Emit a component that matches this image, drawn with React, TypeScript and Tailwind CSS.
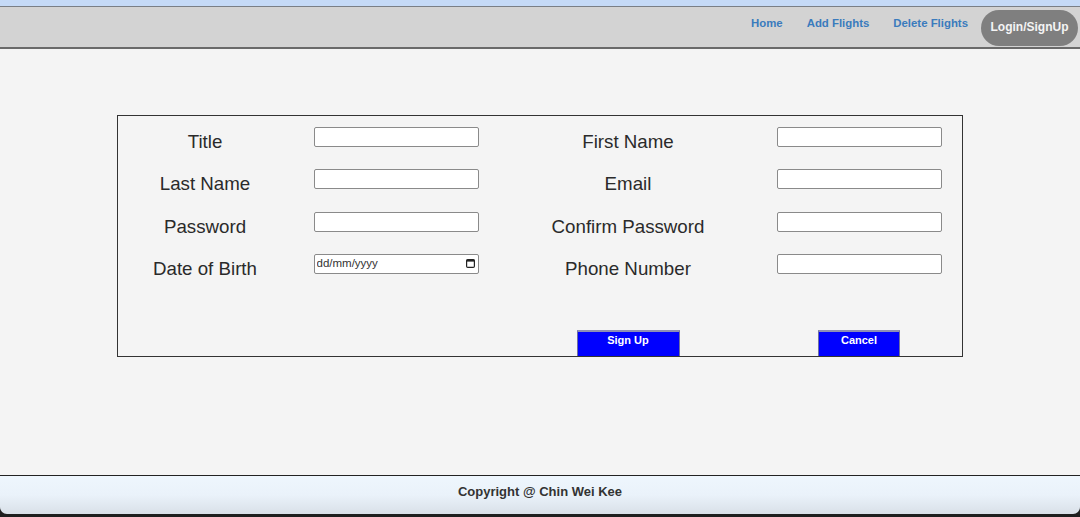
import React from "react";

const leftFields = ["Title", "Last Name", "Password", "Date of Birth"];
const rightFields = ["First Name", "Email", "Confirm Password", "Phone Number"];

function TextBox({ date }: { date?: boolean }) {
    if (date) {
        return (
            <div className="relative w-[165px] h-[20px]">
                <input
                    type="text"
                    placeholder="dd/mm/yyyy"
                    className="block w-full h-full border border-[#8a8a8a] rounded-[2px] bg-white pl-[2px] pb-[1px] text-[11.5px] text-[#222] placeholder:text-[#333] outline-none"
                />
                <svg
                    className="absolute right-[4px] top-[5px]"
                    width="9"
                    height="9"
                    viewBox="0 0 9 9"
                >
                    <rect x="0.6" y="0.6" width="7.8" height="7.8" rx="1.2" fill="none" stroke="#222" strokeWidth="1.2" />
                    <rect x="0.6" y="0.6" width="7.8" height="2" fill="#222" />
                </svg>
            </div>
        );
    }
    return (
        <input
            type="text"
            className="block w-[165px] h-[20px] border border-[#8a8a8a] rounded-[2px] bg-white outline-none"
        />
    );
}

function Label({ text }: { text: string }) {
    return (
        <div className="pt-[15px] text-center text-[18.72px] leading-[22px] text-[#2a2a2a]">
            {text}
        </div>
    );
}

export default function App() {
    return (
        <div
            className="flex flex-col h-[517px] w-[1080px] bg-[#f4f4f4] overflow-hidden"
            style={{ fontFamily: '"Liberation Sans", Arial, sans-serif' }}
        >
            <div className="h-[7px] bg-[#c5daf7] border-b border-[#7a7f86]" />
            <nav className="h-[42px] bg-[#d3d3d3] border-b-2 border-[#6a6a6a] flex justify-end items-start pr-[2px]">
                <a className="mt-[10px] text-[11.4px] leading-[13px] font-bold text-[#3a7bbd]">Home</a>
                <a className="mt-[10px] ml-[24px] text-[11.4px] leading-[13px] font-bold text-[#3a7bbd]">Add Flights</a>
                <a className="mt-[10px] ml-[24px] text-[11.4px] leading-[13px] font-bold text-[#3a7bbd]">Delete Flights</a>
                <button className="mt-[3px] ml-[13px] w-[97px] h-[36px] rounded-full bg-[#7f7f7f] text-[#f4f4f4] text-[12px] font-bold pb-[3px]">
                    Login/SignUp
                </button>
            </nav>

            <main className="flex-1 pt-[66px]">
                <div className="mx-auto w-[846px] h-[242px] border border-[#333] flex flex-col">
                    <div className="grid grid-cols-[174px_208px_256px_206px]">
                        {leftFields.map((left, i) => (
                            <React.Fragment key={left}>
                                <div className="h-[42.33px]">
                                    <Label text={left} />
                                </div>
                                <div className="h-[42.33px] flex justify-center pt-[11px]">
                                    <TextBox date={left === "Date of Birth"} />
                                </div>
                                <div className="h-[42.33px]">
                                    <Label text={rightFields[i]} />
                                </div>
                                <div className="h-[42.33px] flex justify-center pt-[11px]">
                                    <TextBox />
                                </div>
                            </React.Fragment>
                        ))}
                    </div>
                    <div className="mt-auto grid grid-cols-[174px_208px_256px_206px] items-end">
                        <div />
                        <div />
                        <div className="flex justify-center">
                            <button className="w-[103px] h-[26px] bg-[#0000ff] text-white text-[11px] font-bold leading-[13px] pt-[2px] flex justify-center items-start border-t-2 border-x border-t-[#8e8eb4] border-x-[#7070a0] border-b-0">
                                Sign Up
                            </button>
                        </div>
                        <div className="flex justify-center">
                            <button className="w-[82px] h-[26px] bg-[#0000ff] text-white text-[11px] font-bold leading-[13px] pt-[2px] flex justify-center items-start border-t-2 border-x border-t-[#8e8eb4] border-x-[#7070a0] border-b-0">
                                Cancel
                            </button>
                        </div>
                    </div>
                </div>
            </main>

            <footer className="h-[42px] bg-[#1f1f1f] border-t border-[#222] flex flex-col">
                <div className="h-[38px] rounded-b-[7px] bg-gradient-to-b from-[#eef6fd] via-[#eaf2fa] to-[#d9e0e8] text-center pt-[9px] text-[13px] leading-[14px] font-bold text-[#333]">
                    Copyright @ Chin Wei Kee
                </div>
            </footer>
        </div>
    );
}
